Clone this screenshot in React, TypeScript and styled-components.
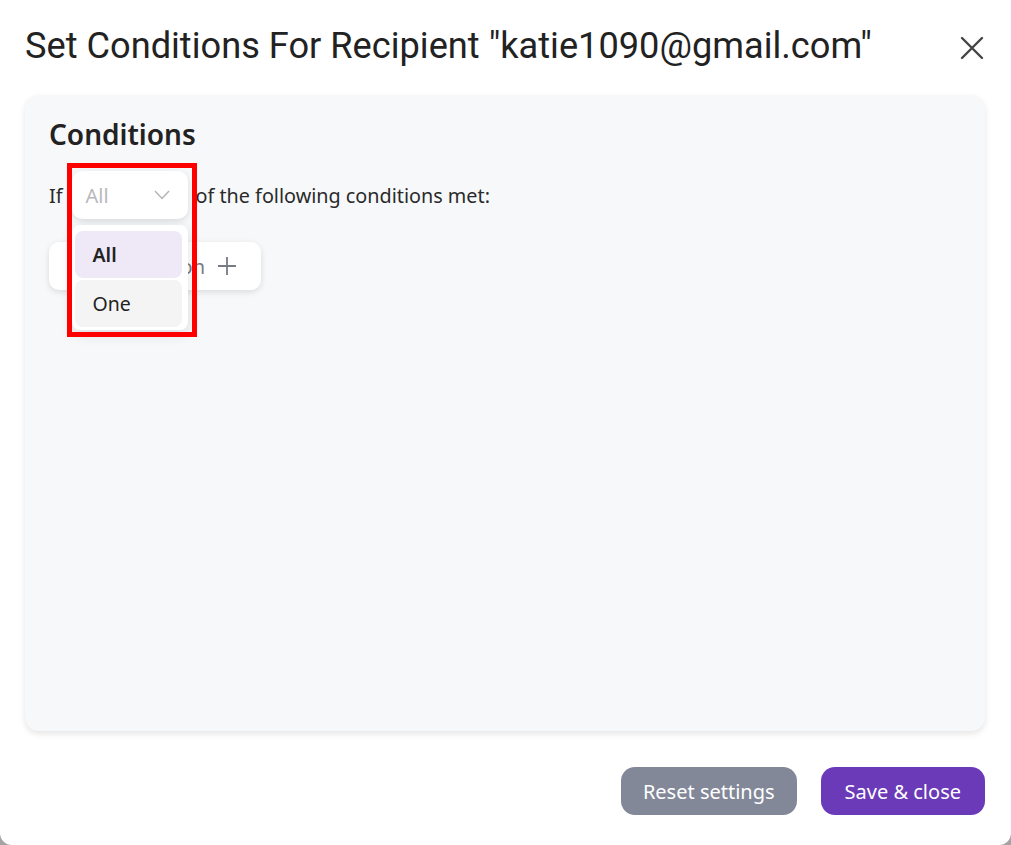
import React from 'react';
import styled, { createGlobalStyle } from 'styled-components';

const GlobalStyle = createGlobalStyle`
  html, body {
    margin: 0;
    padding: 0;
  }
  body {
    background: #a3a3a3;
    overflow: hidden;
    font-family: 'Noto Sans', 'Open Sans', sans-serif;
  }
`;

const Modal = styled.div`
  width: 1011px;
  height: 845px;
  box-sizing: border-box;
  background: #fff;
  border-radius: 0 0 12px 12px;
  display: flex;
  flex-direction: column;
  padding: 0 26px 30px 25px;
`;

const Header = styled.div`
  height: 95px;
  display: flex;
  align-items: center;
  justify-content: space-between;
`;

const Title = styled.h1`
  margin: 0;
  margin-top: -4px;
  font-family: Roboto, 'Liberation Sans', sans-serif;
  font-weight: 400;
  font-size: 36.2px;
  color: #222;
`;

const CloseButton = styled.button`
  border: 0;
  background: none;
  padding: 0;
  width: 26px;
  height: 26px;
  display: flex;
  align-items: center;
  justify-content: center;
  cursor: pointer;
`;

const Panel = styled.div`
  flex: 1;
  background: #f7f8fa;
  border-radius: 14px;
  box-shadow: 0 3px 6px rgba(0, 0, 0, 0.1);
  padding: 18px 24px;
`;

const Heading = styled.h2`
  margin: 0;
  font-size: 28px;
  line-height: 42px;
  font-weight: 600;
  color: #222;
`;

const ConditionRow = styled.div`
  display: flex;
  align-items: center;
  margin-top: 16px;
  font-size: 19.8px;
  color: #2a2a2a;
`;

const SelectWrap = styled.div`
  position: relative;
  margin: 0 8px 0 9px;
`;

const SelectBox = styled.div`
  width: 116px;
  height: 48px;
  box-sizing: border-box;
  background: #fff;
  border-radius: 10px;
  box-shadow: 0 2px 6px rgba(0, 0, 0, 0.12);
  display: flex;
  align-items: center;
  justify-content: space-between;
  padding: 0 18px 0 14px;
  color: #b9b9b9;
  font-size: 20px;
`;

const Menu = styled.div`
  position: absolute;
  top: 54px;
  left: 0;
  width: 116px;
  box-sizing: border-box;
  background: #fff;
  border-radius: 8px;
  box-shadow: 0 4px 14px rgba(0, 0, 0, 0.12);
  padding: 6px 6px 3px 3px;
  display: flex;
  flex-direction: column;
  gap: 2px;
  z-index: 2;
`;

const MenuItem = styled.div<{ $active?: boolean }>`
  height: 47px;
  display: flex;
  align-items: center;
  padding-left: 18px;
  border-radius: 8px;
  font-size: 19.5px;
  font-weight: ${(p) => (p.$active ? 600 : 400)};
  color: #222;
  background: ${(p) => (p.$active ? '#efe9f7' : '#f4f4f4')};
`;

const Highlight = styled.div`
  position: absolute;
  top: -8px;
  left: -5px;
  width: 130px;
  height: 174px;
  box-sizing: border-box;
  border: 5px solid #ff0000;
  pointer-events: none;
  z-index: 3;
`;

const AddButton = styled.button`
  margin-top: 23px;
  width: 212px;
  height: 48px;
  border: 0;
  background: #fff;
  border-radius: 10px;
  box-shadow: 0 2px 6px rgba(0, 0, 0, 0.12);
  display: flex;
  align-items: center;
  justify-content: flex-end;
  gap: 12px;
  padding: 0 24px 0 16px;
  font-family: inherit;
  font-size: 20px;
  color: #777b85;
`;

const Footer = styled.div`
  display: flex;
  justify-content: flex-end;
  gap: 24px;
  padding-top: 36px;
`;

const FooterButton = styled.button<{ $primary?: boolean }>`
  height: 48px;
  border: 0;
  border-radius: 14px;
  padding: 0 ${(p) => (p.$primary ? 24 : 22)}px;
  font-family: inherit;
  font-size: 20px;
  color: #fff;
  background: ${(p) => (p.$primary ? '#6a3ab8' : '#838899')};
`;

const App: React.FC = () => {
  return (
    <>
      <GlobalStyle />
      <Modal>
        <Header>
          <Title>Set Conditions For Recipient "katie1090@gmail.com"</Title>
          <CloseButton aria-label="Close">
            <svg width="24" height="24" viewBox="0 0 24 24">
              <path d="M2 2 L22 22 M22 2 L2 22" stroke="#444" strokeWidth="2.4" strokeLinecap="round" />
            </svg>
          </CloseButton>
        </Header>
        <Panel>
          <Heading>Conditions</Heading>
          <ConditionRow>
            <span>If</span>
            <SelectWrap>
              <SelectBox>
                <span>All</span>
                <svg width="16" height="10" viewBox="0 0 16 10">
                  <path d="M1 1 L8 8.5 L15 1" fill="none" stroke="#b3b3b3" strokeWidth="1.4" />
                </svg>
              </SelectBox>
              <Menu>
                <MenuItem $active>All</MenuItem>
                <MenuItem>One</MenuItem>
              </Menu>
              <Highlight />
            </SelectWrap>
            <span>of the following conditions met:</span>
          </ConditionRow>
          <AddButton>
            <span>Add condition</span>
            <svg width="20" height="20" viewBox="0 0 20 20">
              <path d="M10 1 V19 M1 10 H19" stroke="#777b85" strokeWidth="1.8" />
            </svg>
          </AddButton>
        </Panel>
        <Footer>
          <FooterButton>Reset settings</FooterButton>
          <FooterButton $primary>Save &amp; close</FooterButton>
        </Footer>
      </Modal>
    </>
  );
};

export default App;
